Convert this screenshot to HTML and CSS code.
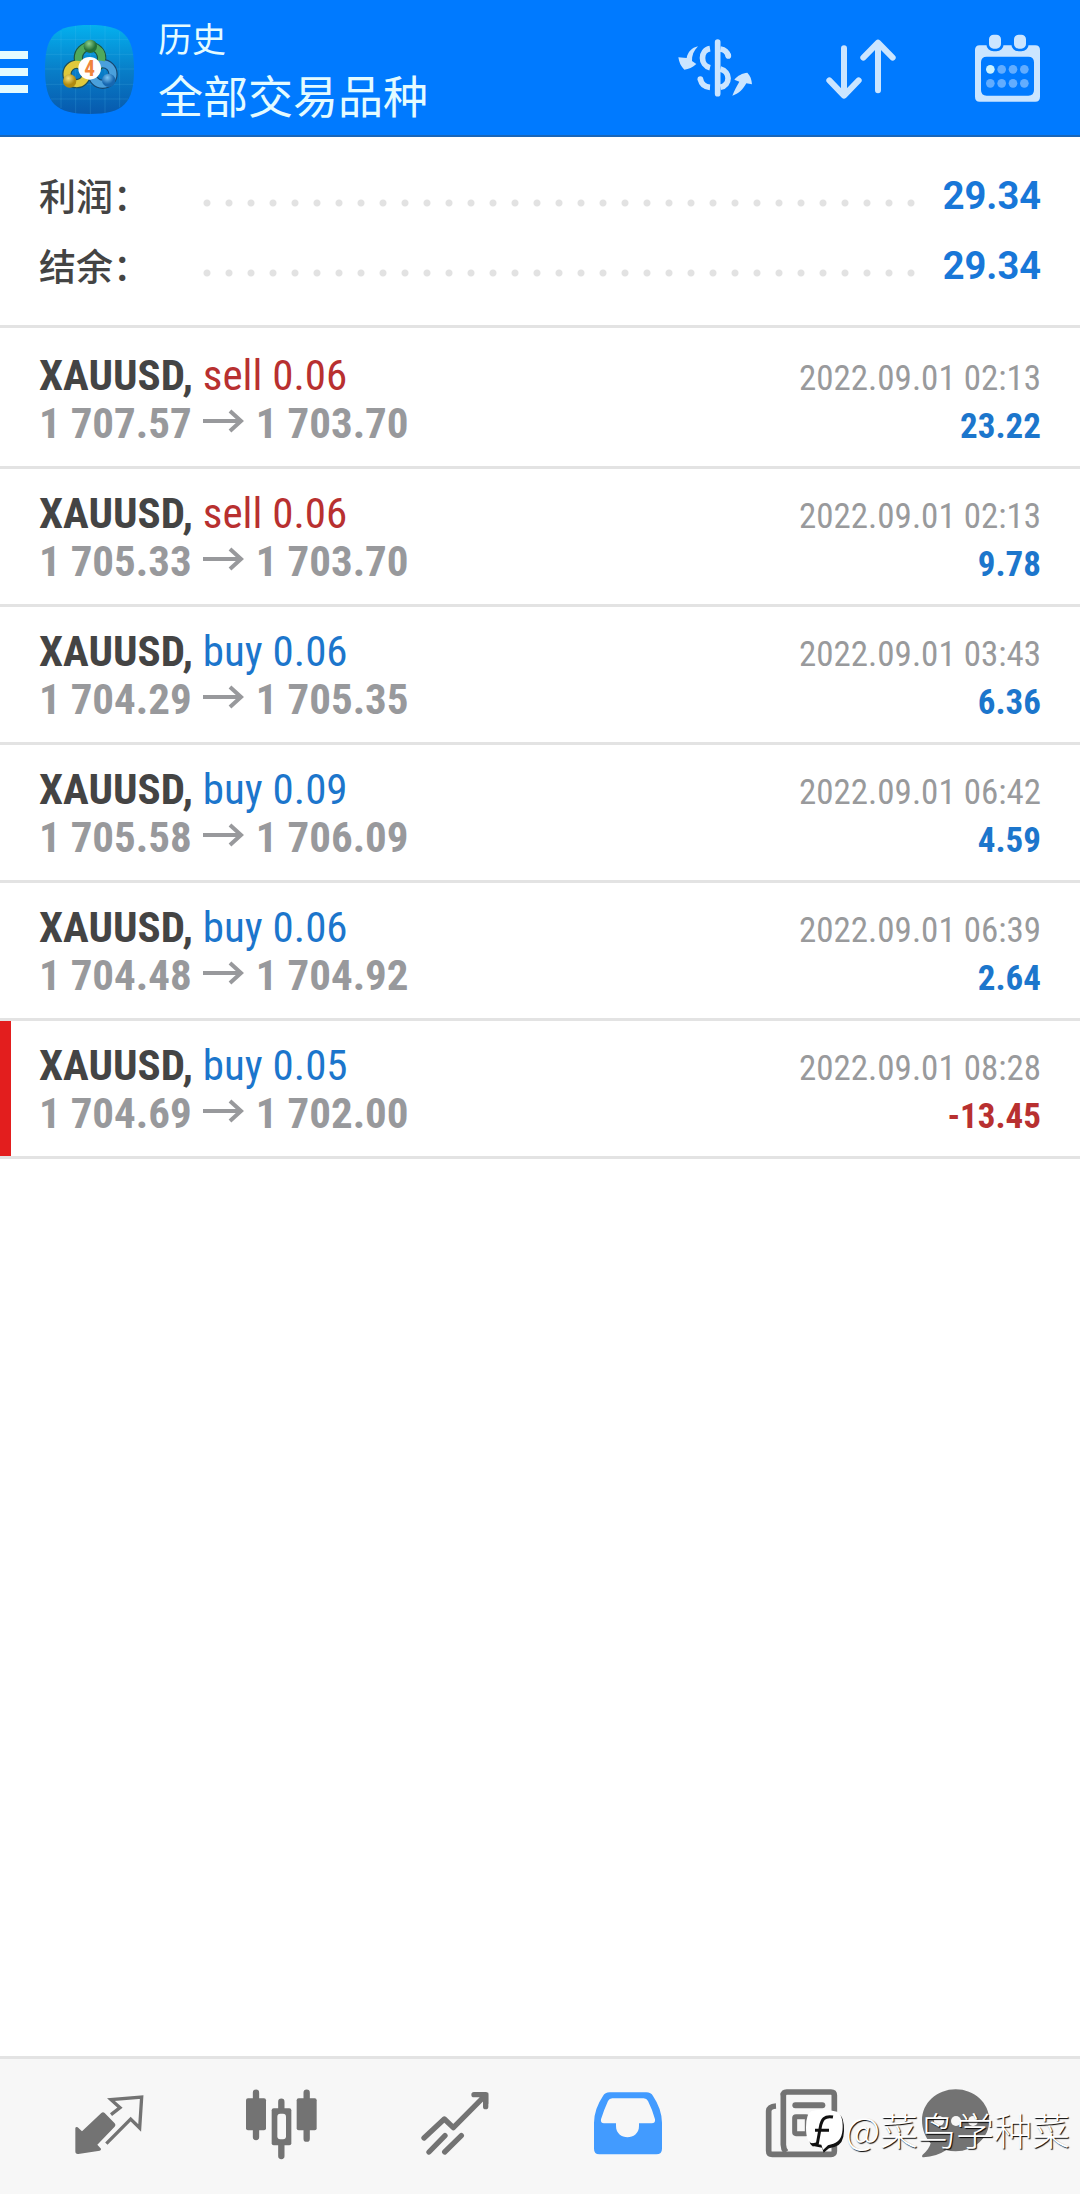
FILE: index.html
```html
<!DOCTYPE html>
<html lang="zh-CN">
<head>
<meta charset="utf-8">
<meta name="viewport" content="width=device-width, initial-scale=1">
<title>历史</title>
<link rel="stylesheet" href="styles.css">
</head>
<body>
<svg class="defs" aria-hidden="true">
  <symbol id="arrow" viewBox="0 0 42 24"><path d="M0 12h38M27 2l11 10-11 10" fill="none" stroke="currentColor" stroke-width="4"/></symbol>
</svg>
<div class="app">
  <header class="topbar">
    <button class="menu" aria-label="菜单"><span></span><span></span><span></span></button>
    <svg class="logo" viewBox="0 0 267 267" aria-hidden="true">
      <defs>
        <linearGradient id="sky" x1="0" y1="0" x2="0" y2="1"><stop offset="0" stop-color="#04b0ee"/><stop offset=".5" stop-color="#087fc9"/><stop offset="1" stop-color="#0759ad"/></linearGradient>
        <radialGradient id="green" cx=".4" cy=".3"><stop offset="0" stop-color="#8fd18c"/><stop offset="1" stop-color="#23713a"/></radialGradient>
        <radialGradient id="gold" cx=".4" cy=".3"><stop offset="0" stop-color="#f6e27a"/><stop offset="1" stop-color="#b08a10"/></radialGradient>
        <radialGradient id="blue" cx=".4" cy=".3"><stop offset="0" stop-color="#7cc4f2"/><stop offset="1" stop-color="#1767b0"/></radialGradient>
      </defs>
      <path d="M134 0C236 0 267 31 267 133S236 267 134 267 0 236 0 133 31 0 134 0Z" fill="url(#sky)"/>
      <path d="M48 18v231M92 2v263M136 0v267M180 2v263M224 20v227M18 44h231M2 88h263M0 132h267M2 178h263M18 222h231" stroke="#5cc4f0" stroke-opacity=".28" stroke-width="2"/>
      <g fill="none" stroke-width="28">
        <circle cx="95" cy="147" r="29" stroke="#1d4e58"/><circle cx="173" cy="147" r="31" stroke="#17466e"/><circle cx="135" cy="99" r="35" stroke="#1d5640"/>
      </g>
      <g fill="none" stroke-width="21">
        <circle cx="135" cy="99" r="35" stroke="#4fa95c"/><circle cx="173" cy="147" r="31" stroke="#4aa0dc"/><circle cx="95" cy="147" r="29" stroke="#dfc93c"/>
      </g>
      <path d="M162 76a35 35 0 0 1 7 31" fill="none" stroke="#4fa95c" stroke-width="21"/>
      <circle cx="136" cy="64" r="20" fill="url(#green)"/>
      <circle cx="74" cy="168" r="20" fill="url(#gold)"/>
      <circle cx="191" cy="166" r="20" fill="url(#blue)"/>
      <circle cx="134" cy="130" r="34" fill="#fff"/>
      <text class="logo-digit" x="134" y="153" text-anchor="middle">4</text>
    </svg>
    <div class="titles">
      <h1>历史</h1>
      <p>全部交易品种</p>
    </div>
    <div class="actions">
      <button aria-label="交易品种">
        <svg viewBox="81 58 288 288">
          <g fill="none" stroke="#cbe5ff" stroke-width="17">
            <path d="M233 124v155" stroke-linecap="round"/>
            <path d="M210 144c-30 5-30 50 0 57M181 235c3 15 14 24 29 25M241 145c13 2 21 9 24 21" />
            <path d="M265 165v1M181 235v0" stroke-linecap="round"/>
            <path d="M241 205c31 8 31 48 0 55"/>
          </g>
          <path d="M174 137c-19 4-31 18-34 35l-25-2c2 15 8 28 18 37 13-1 25-7 36-17l-13-9c-1-15 5-31 18-44Z" fill="#cbe5ff"/>
          <path d="M277 285c5-14 14-30 21-42l-15-6c10-12 24-20 39-21 9 9 13 20 14 35l-17-3c-9 17-23 32-42 37Z" fill="#cbe5ff"/>
        </svg>
      </button>
      <button aria-label="排序">
        <svg viewBox="519 58 288 288"><path d="M612 143v141M568 239l44 46 44-46M714 269V127M670 171l44-45 44 45" fill="none" stroke="#cbe5ff" stroke-width="18" stroke-linecap="round" stroke-linejoin="round"/></svg>
      </button>
      <button aria-label="日期">
        <svg viewBox="957 58 288 288">
          <path fill="#cbe5ff" fill-rule="evenodd" d="M1019 134h167q14 0 14 14v140q0 15-14 15h-167q-14 0-14-15V148q0-14 14-14ZM1040 168q-17 0-17 17v83q0 17 17 17h125q17 0 17-17v-83q0-17-17-17Z"/>
          <g fill="#cbe5ff" stroke="#007aff" stroke-width="8"><rect x="1043" y="98" width="44" height="50" rx="18"/><rect x="1118" y="98" width="44" height="50" rx="18"/></g>
          <g fill="#62adff"><circle cx="1085" cy="206" r="13"/><circle cx="1119" cy="206" r="13"/><circle cx="1153" cy="206" r="13"/><circle cx="1051" cy="248" r="13"/><circle cx="1085" cy="248" r="13"/><circle cx="1119" cy="248" r="13"/><circle cx="1153" cy="248" r="13"/></g>
          <circle cx="1051" cy="206" r="13" fill="#cbf2ff"/>
        </svg>
      </button>
    </div>
  </header>

  <main>
    <dl class="summary">
      <div><dt>利润：</dt><dd>29.34</dd></div>
      <div><dt>结余：</dt><dd>29.34</dd></div>
    </dl>
    <ul class="deals">
      <li>
        <div class="line"><span class="name"><b>XAUUSD,</b> <span class="sell">sell 0.06</span></span><time>2022.09.01 02:13</time></div>
        <div class="line"><span class="prices">1 707.57<svg><use href="#arrow"/></svg>1 703.70</span><span class="profit">23.22</span></div>
      </li>
      <li>
        <div class="line"><span class="name"><b>XAUUSD,</b> <span class="sell">sell 0.06</span></span><time>2022.09.01 02:13</time></div>
        <div class="line"><span class="prices">1 705.33<svg><use href="#arrow"/></svg>1 703.70</span><span class="profit">9.78</span></div>
      </li>
      <li>
        <div class="line"><span class="name"><b>XAUUSD,</b> <span class="buy">buy 0.06</span></span><time>2022.09.01 03:43</time></div>
        <div class="line"><span class="prices">1 704.29<svg><use href="#arrow"/></svg>1 705.35</span><span class="profit">6.36</span></div>
      </li>
      <li>
        <div class="line"><span class="name"><b>XAUUSD,</b> <span class="buy">buy 0.09</span></span><time>2022.09.01 06:42</time></div>
        <div class="line"><span class="prices">1 705.58<svg><use href="#arrow"/></svg>1 706.09</span><span class="profit">4.59</span></div>
      </li>
      <li>
        <div class="line"><span class="name"><b>XAUUSD,</b> <span class="buy">buy 0.06</span></span><time>2022.09.01 06:39</time></div>
        <div class="line"><span class="prices">1 704.48<svg><use href="#arrow"/></svg>1 704.92</span><span class="profit">2.64</span></div>
      </li>
      <li class="stopped">
        <div class="line"><span class="name"><b>XAUUSD,</b> <span class="buy">buy 0.05</span></span><time>2022.09.01 08:28</time></div>
        <div class="line"><span class="prices">1 704.69<svg><use href="#arrow"/></svg>1 702.00</span><span class="profit loss">-13.45</span></div>
      </li>
    </ul>
  </main>

  <nav class="tabs">
    <a href="#quotes" aria-label="行情">
      <svg viewBox="178 116 288 288">
        <path d="M302 221q5-4 10 0l30 31q5 5 0 10l-52 54 11 12q1 5-4 6l-64 10q-9 1-9-8v-70q2-5 7-2l13 12Z" fill="#737373"/>
        <path d="M331 226l27-21-27-24 92-8-6 93-27-27-73 74" fill="none" stroke="#737373" stroke-width="10"/>
      </svg>
    </a>
    <a href="#charts" aria-label="图表">
      <svg viewBox="698 116 288 288">
        <path d="M767 160v133M919 160v138M843 187v25M843 314v36" stroke="#737373" stroke-width="19" stroke-linecap="round"/>
        <rect x="737" y="177" width="60" height="96" rx="6" fill="#737373"/>
        <rect x="889" y="177" width="60" height="96" rx="6" fill="#737373"/>
        <rect x="814" y="207" width="59" height="111" rx="6" fill="#737373"/>
        <rect x="831" y="223" width="26" height="77" rx="9" fill="#f7f7f7"/>
      </svg>
    </a>
    <a href="#trade" aria-label="交易">
      <svg viewBox="136 116 288 288">
        <path d="M190 296l61-57 27 26 96-97M340 166h35v36M205 338l48-49M252 338l50-49" fill="none" stroke="#737373" stroke-width="16" stroke-linecap="round" stroke-linejoin="round"/>
        <path d="M350 160h33v34Z" fill="#737373"/>
      </svg>
    </a>
    <a href="#history" aria-label="历史" aria-current="page">
      <svg viewBox="656 116 288 288">
        <path fill="#429bff" fill-rule="evenodd" d="M748 159h110q14 0 20 11 26 38 27 80v78q0 17-17 17H717q-16 0-16-17v-78q1-42 27-80 6-11 20-11ZM756 177q-9 0-13 8-12 26-21 55-2 12 9 12h36v8c0 45 69 45 69 0v-8h38q12 0 10-12-7-27-21-55-4-8-13-8Z"/>
      </svg>
    </a>
    <a href="#news" aria-label="新闻">
      <svg viewBox="94 116 288 288">
        <g fill="none" stroke="#737373">
          <path d="M188 168q0-10 10-10h133q10 0 10 10v167q0 10-10 10H155q-11 0-11-11V215q1-14 22-15" stroke-width="17"/>
          <path d="M188 160v156q0 12 8 22" stroke-width="17"/>
          <path d="M224 198h81" stroke-width="18" stroke-linecap="round"/>
          <rect x="222" y="232" width="38" height="51" rx="4" stroke-width="15"/>
          <path d="M285 232h26M285 256h26M285 280h26" stroke-width="13" stroke-linecap="round"/>
        </g>
      </svg>
    </a>
    <a href="#chat" aria-label="消息">
      <svg viewBox="613 116 288 288">
        <path d="M705 150c56 0 101 41 101 93s-45 93-101 93q-15 0-28-4-30 20-68 22-8-1-3-8 19-15 24-34c-16-17-26-42-26-69 0-52 45-93 101-93Z" fill="#737373"/>
        <g fill="#f7f7f7"><circle cx="655" cy="245" r="15"/><circle cx="706" cy="245" r="15"/><circle cx="757" cy="245" r="15"/></g>
      </svg>
    </a>
  </nav>

  <div class="watermark">
    <svg viewBox="240 222 120 132" aria-hidden="true">
      <path d="M266 234q38-12 76 4 16 10 15 50-1 40-27 47l-18 5-16 13-5-15-30-6q-12-6-10-50 0-40 15-48Z" fill="#111"/>
      <path d="M260 228q38-9 76 2 18 10 17 46 0 42-28 50l-16 5-15 14-5-16-28-4q-18-4-18-48 0-42 17-49Z" fill="#fff"/>
      <path d="M324 246c-26-5-34 8-38 30l-9 50-15 4M270 286h42" fill="none" stroke="#111" stroke-width="9"/>
    </svg>
    <span>@菜鸟学种菜</span>
  </div>
</div>
</body>
</html>
```
FILE: styles.css
```css
* { box-sizing: border-box; margin: 0; padding: 0; }

body {
  background: #fff;
  color: #444;
  font-family: "Roboto Condensed", Roboto, "Noto Sans CJK SC", sans-serif;
}

button { border: 0; background: none; font: inherit; color: inherit; }
ul { list-style: none; }
.defs { display: none; }

.app {
  position: relative;
  display: flex;
  flex-direction: column;
  min-height: 100vh;
}

main { flex: 1; }

/* Top bar */
.topbar {
  display: flex;
  align-items: center;
  background: #007aff;
  border-bottom: 2px solid #1a66b8;
  color: #e4fbff;
  font-family: "Noto Sans CJK SC", sans-serif;
}

.menu {
  display: flex;
  flex-direction: column;
  gap: 9px;
  width: 28px;
  padding-top: 8px;
}

.menu span { height: 8px; background: #e4fbff; }

.logo { width: 89px; height: 89px; margin: 4px 24px 0 17px; }

.logo-digit {
  font: bold 64px "Roboto Condensed", sans-serif;
  fill: #f0853c;
}

.titles { flex: 1; padding: 13px 0 8px; }

.titles h1 { font-size: 34px; font-weight: 400; line-height: 50px; }

.titles p { font-size: 45px; line-height: 64px; }

.actions { display: flex; }

.actions button {
  display: flex;
  justify-content: center;
  width: 146px;
}

.actions svg { width: 96px; height: 96px; }

/* Totals */
.summary {
  padding: 23px 39px 25px;
  border-bottom: 3px solid #e3e3e3;
}

.summary div {
  display: flex;
  line-height: 70px;
}

.summary dt {
  width: 157px;
  font-family: "Noto Sans CJK SC", sans-serif;
  font-size: 37px;
  font-weight: 500;
}

.summary dd {
  display: flex;
  flex: 1;
  color: #1877d8;
  font: bold 38px/72px Roboto, sans-serif;
  height: 70px;
}

.summary dd::before {
  content: "";
  flex: 1;
  margin-right: 20px;
  background: radial-gradient(circle, #e2e2e2 3px, transparent 4px) 0 39px / 22px 8px repeat-x;
}

/* Deal list */
.deals { padding-top: 3px; }

.deals li {
  padding: 20px 39px 19px;
  border-bottom: 3px solid #e3e3e3;
}

.deals .stopped {
  background: linear-gradient(#e31e1e, #e31e1e) 0 0 / 11px 100% no-repeat;
}

.line {
  display: flex;
  justify-content: space-between;
  align-items: baseline;
  height: 48px;
  line-height: 48px;
}

.name, .prices { font-size: 43px; }

.prices { color: #98999c; font-weight: 700; }

.prices svg { width: 42px; height: 24px; margin: 0 11px 5px; }

.sell { color: #b83030; }
.buy { color: #1c76cc; }

time { color: #999a9c; font-size: 35px; }

.profit { color: #1c76cc; font-size: 35px; font-weight: 700; }
.loss { color: #b83030; }

/* Bottom tabs */
.tabs {
  display: flex;
  padding: 19px 21px 20px;
  background: #f7f7f7;
  border-top: 3px solid #e3e3e3;
}

.tabs a {
  display: flex;
  flex: 1;
  justify-content: center;
}

.tabs svg { width: 96px; height: 96px; overflow: visible; }

.watermark {
  position: absolute;
  right: 10px;
  bottom: 37px;
  display: flex;
  align-items: center;
  color: #fff;
  font: 300 38px/56px "Noto Sans CJK SC", sans-serif;
  text-shadow: 1px 1px 1px #000;
}

.watermark svg { width: 40px; height: 44px; margin-top: 3px; }
```
